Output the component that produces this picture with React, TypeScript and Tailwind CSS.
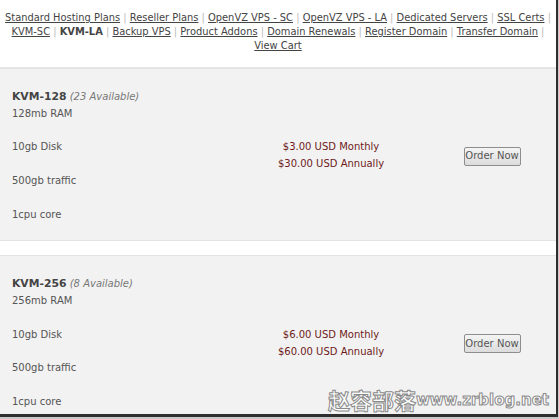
const navRows: { label: string; bold?: boolean }[][] = [
  [
    { label: 'Standard Hosting Plans' },
    { label: 'Reseller Plans' },
    { label: 'OpenVZ VPS - SC' },
    { label: 'OpenVZ VPS - LA' },
    { label: 'Dedicated Servers' },
    { label: 'SSL Certs' },
  ],
  [
    { label: 'KVM-SC' },
    { label: 'KVM-LA', bold: true },
    { label: 'Backup VPS' },
    { label: 'Product Addons' },
    { label: 'Domain Renewals' },
    { label: 'Register Domain' },
    { label: 'Transfer Domain' },
  ],
];

const plans = [
  { name: 'KVM-128', avail: '23 Available', ram: '128mb RAM', monthly: '$3.00', annually: '$30.00' },
  { name: 'KVM-256', avail: '8 Available', ram: '256mb RAM', monthly: '$6.00', annually: '$60.00' },
];

const Plan = ({ plan }: { plan: (typeof plans)[number] }) => (
  <div className="grid grid-cols-[238px_186px_132px] items-center bg-[#f2f2f2] border-y border-[#e3e3e3] pt-[20px] pb-[17px] text-[10px] leading-[16.8px] text-[#555]">
    <div className="pl-3">
      <div>
        <span className="font-bold text-[10.8px] text-[#444]">{plan.name}</span>{' '}
        <span className="italic text-[#777]">({plan.avail})</span>
      </div>
      <div>{plan.ram}</div>
      <div>&nbsp;</div>
      <div>10gb Disk</div>
      <div>&nbsp;</div>
      <div>500gb traffic</div>
      <div>&nbsp;</div>
      <div>1cpu core</div>
    </div>
    <div className="text-center text-[#6e1b1b]">
      <div>{plan.monthly} USD Monthly</div>
      <div>{plan.annually} USD Annually</div>
    </div>
    <div className="flex justify-center pl-1">
      <button className="h-[19px] w-[57px] rounded-[2px] border border-[#8e8e8e] bg-gradient-to-b from-[#f4f4f4] to-[#dcdcdc] text-[10px] leading-none text-[#555] whitespace-nowrap">
        Order Now
      </button>
    </div>
  </div>
);

const App = () => {
  return (
    <div className="w-[559px] h-[419px] bg-[#c8c8c8] overflow-hidden" style={{ fontFamily: '"DejaVu Sans", sans-serif' }}>
      <div className="relative w-[558px] h-[417px] overflow-hidden bg-white border-r-2 border-b-[3px] border-[#2e2e2e]">
        <div className="h-[68px] pt-[11px] border-b border-[#e6e6e6] text-center text-[9.9px] leading-[14px] text-[#444]">
          {navRows.map((row, i) => (
            <div key={i} className="whitespace-nowrap">
              {row.map((item) => (
                <span key={item.label}>
                  {item.bold ? (
                    <span className="font-bold">{item.label}</span>
                  ) : (
                    <a className="underline">{item.label}</a>
                  )}
                  <span className="text-[#bbb]"> | </span>
                </span>
              ))}
            </div>
          ))}
          <div>
            <a className="underline">View Cart</a>
          </div>
        </div>
        <Plan plan={plans[0]} />
        <div className="h-[14px] bg-white" />
        <Plan plan={plans[1]} />
        <div className="absolute right-[7px] bottom-[4px] flex items-end text-white font-bold [-webkit-text-stroke:1px_#8a8a8a]">
          <span className="text-[22px] leading-none" style={{ fontFamily: '"Noto Sans CJK SC", sans-serif' }}>
            赵容部落
          </span>
          <span className="text-[15px] leading-none mb-[2px]" style={{ fontFamily: '"DejaVu Sans", sans-serif' }}>
            www.zrblog.net
          </span>
        </div>
      </div>
    </div>
  );
};

export default App;
